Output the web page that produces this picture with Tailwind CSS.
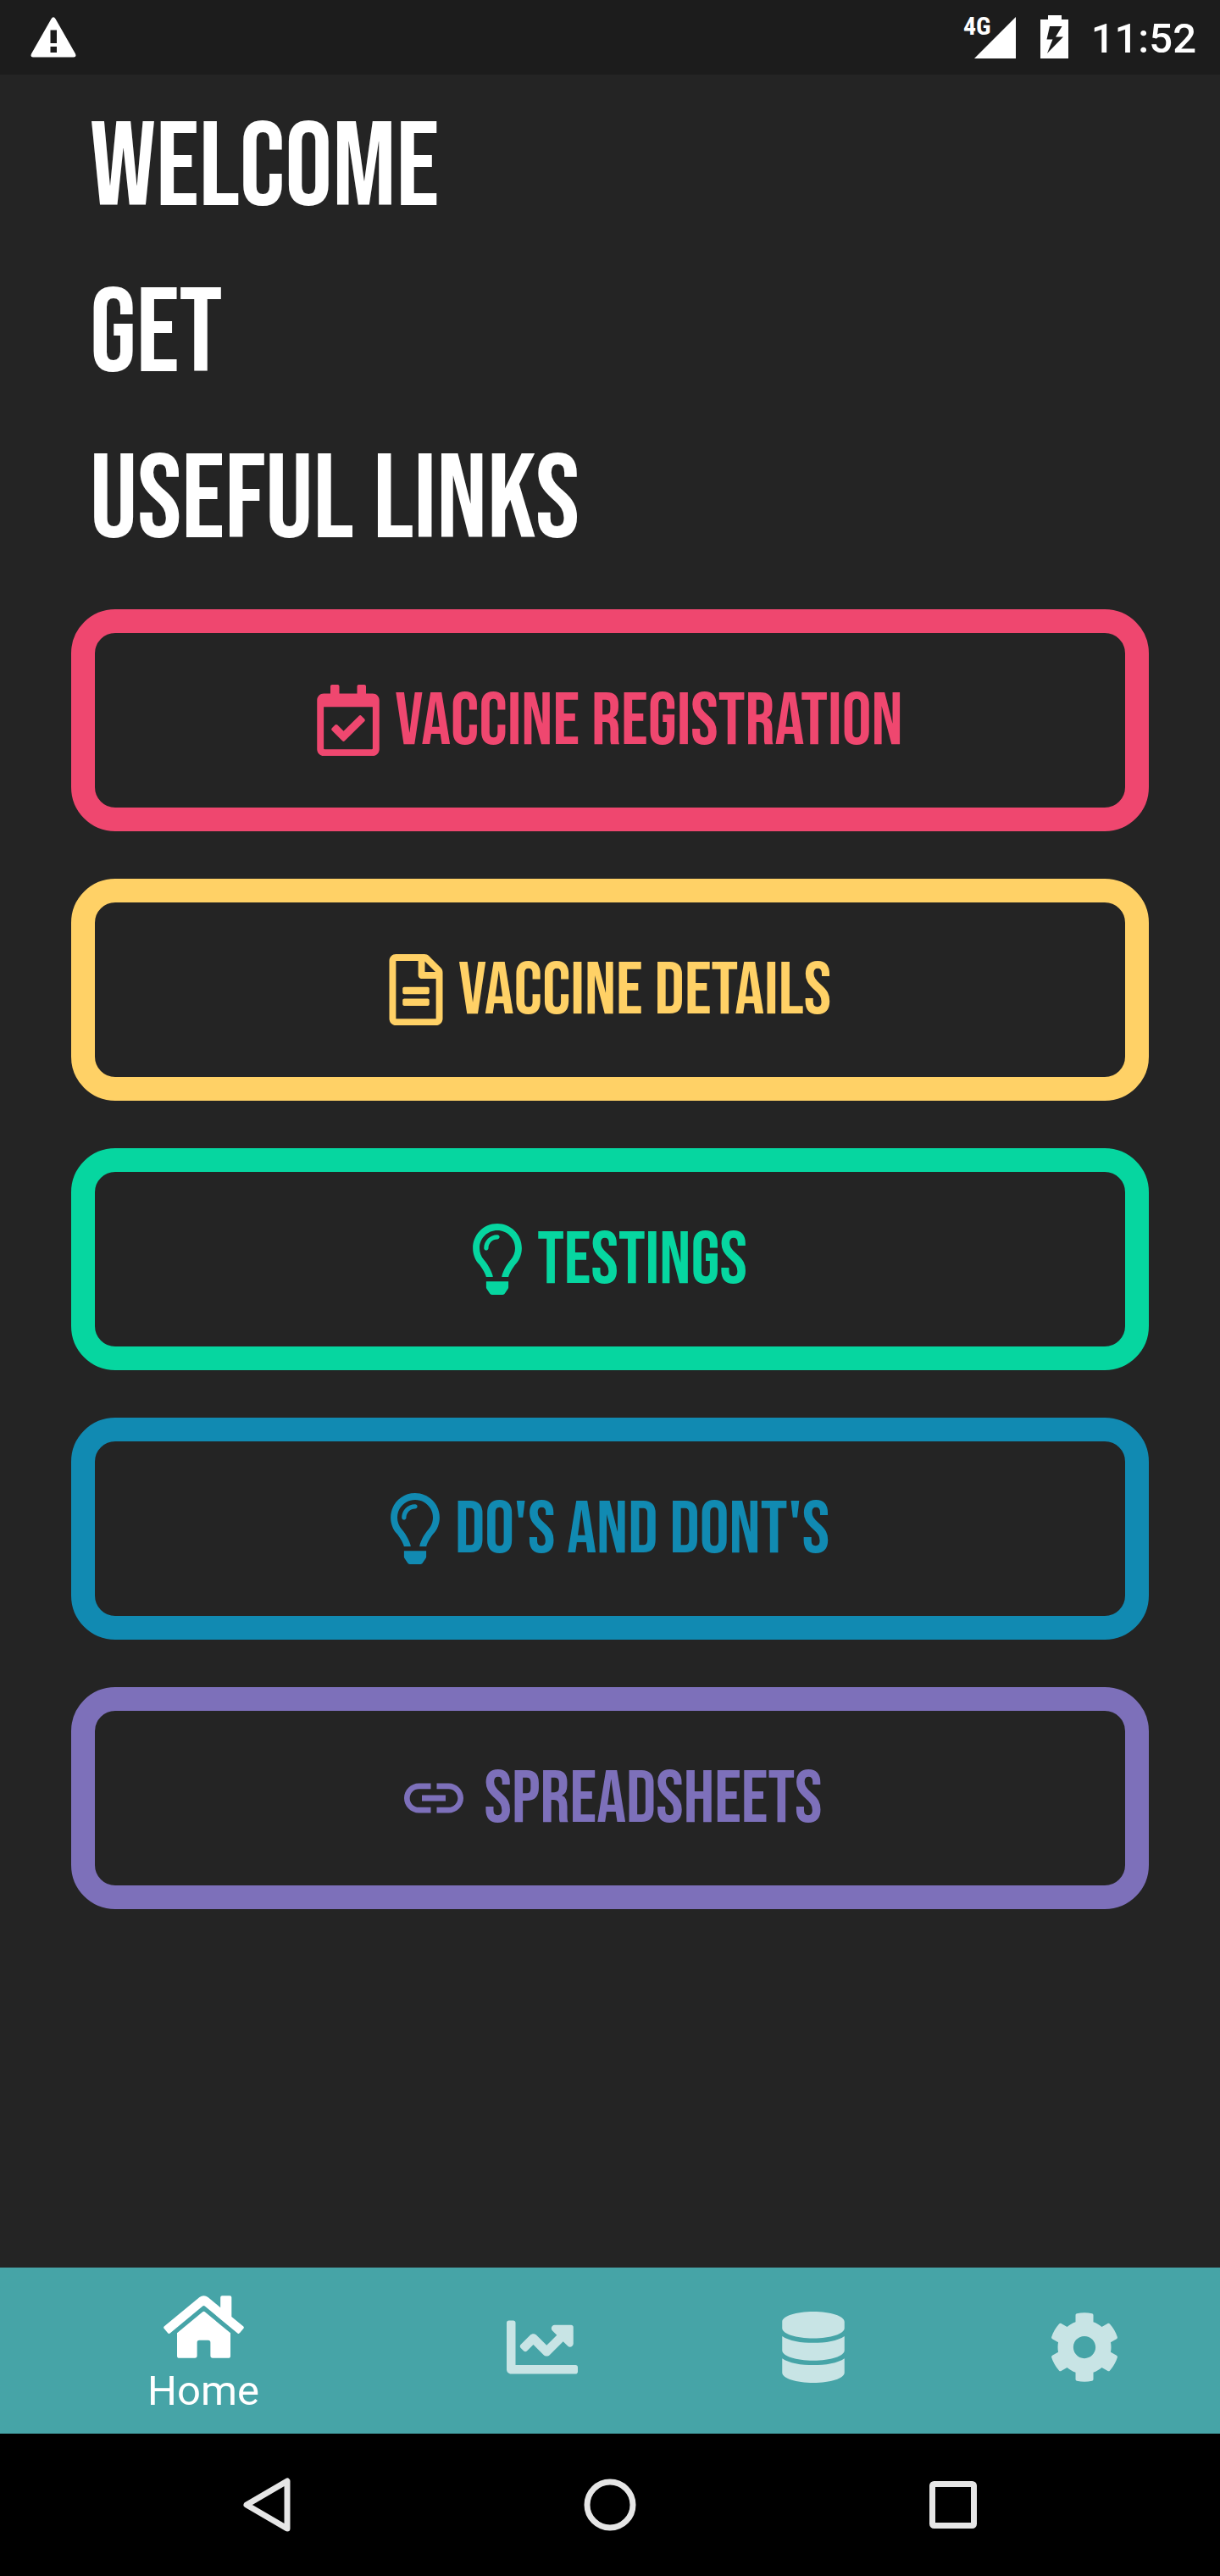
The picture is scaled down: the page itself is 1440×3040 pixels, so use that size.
<!DOCTYPE html>
<html lang="en">
<head>
<meta charset="utf-8">
<meta name="viewport" content="width=device-width, initial-scale=1">
<title>Useful Links</title>
<script src="https://cdn.jsdelivr.net/npm/@tailwindcss/browser@4"></script>
</head>
<body class="flex min-h-screen flex-col bg-[#242424] font-['Roboto',sans-serif] text-white">

<!-- Status bar -->
<header class="flex h-[88px] shrink-0 items-center justify-between bg-[#1c1c1c] pl-9 pr-7">
  <svg class="h-[48px] w-[54px]" viewBox="0 0 54 48" fill="currentColor" aria-label="Warning"><path fill-rule="evenodd" d="M24.5 2.2Q27-1.6 29.5 2.2L53 43.5Q54.600 47.500 51 47.500H3Q-.6 47.500 1 43.500ZM23.500 15.500V31H31V15.500ZM23.500 35V42H31V35Z"/></svg>
  <div class="flex items-center">
    <div class="flex h-[50px] items-start">
      <span class="text-[30px] leading-6 font-bold font-['Roboto_Condensed','Liberation_Sans_Narrow',sans-serif]">4G</span>
      <svg class="-ml-5 h-[50px] w-[50px]" viewBox="0 0 50 50" fill="currentColor" aria-hidden="true"><path d="M49 1V50H0Z"/></svg>
    </div>
    <svg class="ml-7 h-[52px] w-[34px]" viewBox="0 0 34 52" fill="currentColor" aria-label="Charging"><path fill-rule="evenodd" d="M9 0H25V5H33V51H0V5H9ZM11 13L7.500 28.500H14.500L8 45L27 25.500H18L25.500 13Z"/></svg>
    <time class="ml-[26px] pt-1 text-[49px] leading-[56px] font-medium">11:52</time>
  </div>
</header>

<main class="flex flex-1 flex-col px-[84px] pt-[14px] pb-[112px] font-['Bebas_Neue','Liberation_Sans_Narrow',sans-serif]">
  <h1 class="pl-[22px] text-[140px] leading-[196px] font-normal">
    <span class="block">WELCOME</span>
    <span class="block">GET</span>
    <span class="block">USEFUL LINKS</span>
  </h1>

  <nav class="mt-[29px] flex flex-col gap-14 text-[87px] leading-none" aria-label="Useful links">
    <button class="flex h-[262px] items-center justify-center gap-[18px] rounded-[52px] border-[28px] border-[#ef476f] text-[#ef476f]">
      <svg class="h-[84px] w-[74px]" viewBox="0 0 448 512" fill="currentColor" aria-hidden="true"><path d="M400 64h-48V12c0-6.627-5.373-12-12-12h-40c-6.627 0-12 5.373-12 12v52H160V12c0-6.627-5.373-12-12-12h-40c-6.627 0-12 5.373-12 12v52H48C21.490 64 0 85.490 0 112v352c0 26.510 21.490 48 48 48h352c26.510 0 48-21.490 48-48V112c0-26.510-21.490-48-48-48zm-6 400H54a6 6 0 0 1-6-6V160h352v298a6 6 0 0 1-6 6zm-52.849-200.650L198.842 404.519c-4.705 4.667-12.303 4.637-16.971-.068l-75.091-75.699c-4.667-4.705-4.637-12.303.068-16.971l22.719-22.536c4.705-4.667 12.303-4.637 16.970.069l44.104 44.461 111.072-110.181c4.705-4.667 12.303-4.637 16.971.068l22.536 22.718c4.667 4.705 4.636 12.303-.069 16.970z"/></svg>
      <span class="pt-1">VACCINE REGISTRATION</span>
    </button>
    <button class="flex h-[262px] items-center justify-center gap-[18px] rounded-[52px] border-[28px] border-[#ffd166] text-[#ffd166]">
      <svg class="h-[84px] w-[64px]" viewBox="0 0 384 512" fill="currentColor" aria-hidden="true"><path d="M288 248v28c0 6.600-5.400 12-12 12H108c-6.600 0-12-5.400-12-12v-28c0-6.600 5.400-12 12-12h168c6.600 0 12 5.400 12 12zm-12 72H108c-6.600 0-12 5.400-12 12v28c0 6.600 5.400 12 12 12h168c6.600 0 12-5.400 12-12v-28c0-6.600-5.400-12-12-12zm108-188.100V464c0 26.500-21.500 48-48 48H48c-26.500 0-48-21.500-48-48V48C0 21.500 21.500 0 48 0h204.100C264.800 0 277 5.100 286 14.100L369.900 98c9 8.900 14.100 21.200 14.100 33.900zm-128-80V128h76.100L256 51.900zM336 464V176H232c-13.300 0-24-10.700-24-24V48H48v416h288z"/></svg>
      <span class="pt-1">VACCINE DETAILS</span>
    </button>
    <button class="flex h-[262px] items-center justify-center gap-[18px] rounded-[52px] border-[28px] border-[#06d6a0] text-[#06d6a0]">
      <svg class="h-[84px] w-[58px]" viewBox="0 0 352 512" fill="currentColor" aria-hidden="true"><path d="M176 80c-52.940 0-96 43.060-96 96 0 8.840 7.160 16 16 16s16-7.160 16-16c0-35.300 28.720-64 64-64 8.840 0 16-7.160 16-16s-7.160-16-16-16zM96.060 459.170c0 3.150.93 6.220 2.680 8.840l24.510 36.840c2.970 4.460 7.970 7.140 13.320 7.140h78.850c5.360 0 10.360-2.680 13.320-7.140l24.510-36.840c1.740-2.620 2.670-5.700 2.680-8.840l.05-43.180H96.020l.04 43.180zM176 0C73.720 0 0 82.970 0 176c0 44.370 16.450 84.850 43.560 115.780 16.640 18.990 42.740 58.800 52.420 92.160v.06h48v-.12c-.01-4.770-.72-9.510-2.150-14.070-5.590-17.810-22.820-64.770-62.170-109.670-20.540-23.430-31.520-53.150-31.610-84.140-.2-73.640 59.670-128 127.950-128 70.580 0 128 57.420 128 128 0 30.970-11.240 60.850-31.650 84.140-39.110 44.610-56.420 91.470-62.100 109.460a47.507 47.507 0 0 0-2.220 14.300v.1h48v-.05c9.680-33.370 35.780-73.180 52.420-92.160C335.550 260.850 352 220.370 352 176 352 78.800 273.200 0 176 0z"/></svg>
      <span class="pt-1">TESTINGS</span>
    </button>
    <button class="flex h-[262px] items-center justify-center gap-[18px] rounded-[52px] border-[28px] border-[#118ab2] text-[#118ab2]">
      <svg class="h-[84px] w-[58px]" viewBox="0 0 352 512" fill="currentColor" aria-hidden="true"><path d="M176 80c-52.940 0-96 43.060-96 96 0 8.840 7.160 16 16 16s16-7.160 16-16c0-35.300 28.720-64 64-64 8.840 0 16-7.160 16-16s-7.160-16-16-16zM96.060 459.170c0 3.150.93 6.220 2.680 8.840l24.510 36.840c2.970 4.460 7.970 7.140 13.320 7.140h78.850c5.360 0 10.360-2.680 13.320-7.140l24.510-36.840c1.740-2.620 2.670-5.700 2.680-8.840l.05-43.180H96.020l.04 43.180zM176 0C73.720 0 0 82.970 0 176c0 44.370 16.450 84.850 43.560 115.780 16.640 18.990 42.740 58.800 52.420 92.160v.06h48v-.12c-.01-4.770-.72-9.510-2.150-14.070-5.590-17.810-22.820-64.770-62.170-109.670-20.540-23.430-31.520-53.150-31.610-84.140-.2-73.640 59.670-128 127.950-128 70.580 0 128 57.420 128 128 0 30.970-11.240 60.850-31.650 84.140-39.110 44.610-56.420 91.470-62.100 109.460a47.507 47.507 0 0 0-2.220 14.300v.1h48v-.05c9.680-33.370 35.780-73.180 52.420-92.160C335.550 260.850 352 220.370 352 176 352 78.800 273.200 0 176 0z"/></svg>
      <span class="pt-1">DO'S AND DONT'S</span>
    </button>
    <button class="flex h-[262px] items-center justify-center gap-[18px] rounded-[52px] border-[28px] border-[#7d70ba] text-[#7d70ba]">
      <svg class="h-[84px] w-[84px]" viewBox="0 0 24 24" fill="currentColor" aria-hidden="true"><path d="M3.900 12c0-1.710 1.390-3.100 3.100-3.100h4V7H7c-2.760 0-5 2.240-5 5s2.240 5 5 5h4v-1.900H7c-1.710 0-3.100-1.390-3.100-3.100zM8 13h8v-2H8v2zm9-6h-4v1.900h4c1.710 0 3.100 1.390 3.100 3.100s-1.390 3.100-3.100 3.100h-4V17h4c2.760 0 5-2.240 5-5s-2.240-5-5-5z"/></svg>
      <span class="pt-1">SPREADSHEETS</span>
    </button>
  </nav>
</main>

<!-- Tab bar -->
<nav class="grid h-[196px] shrink-0 grid-cols-[3fr_2fr_2fr_2fr] bg-[#46a4a7]" aria-label="Main">
  <a href="#home" class="flex flex-col items-center pt-7" aria-current="page">
    <svg class="h-[84px] w-[95px]" viewBox="0 0 576 512" fill="currentColor" aria-hidden="true"><path d="M280.370 148.260L96 300.110V464a16 16 0 0 0 16 16l112.060-.29a16 16 0 0 0 15.920-16V368a16 16 0 0 1 16-16h64a16 16 0 0 1 16 16v95.640a16 16 0 0 0 16 16.050L464 480a16 16 0 0 0 16-16V300L295.670 148.260a12.190 12.190 0 0 0-15.300 0zM571.600 251.470L488 182.560V44.050a12 12 0 0 0-12-12h-56a12 12 0 0 0-12 12v72.610L318.470 43a48 48 0 0 0-61 0L4.340 251.470a12 12 0 0 0-1.600 16.900l25.500 31A12 12 0 0 0 45.150 301l235.220-193.740a12.190 12.190 0 0 1 15.300 0L530.900 301a12 12 0 0 0 16.900-1.600l25.500-31a12 12 0 0 0-1.700-16.930z"/></svg>
    <span class="mt-[6px] text-[49px] leading-[56px]">Home</span>
  </a>
  <a href="#statistics" class="flex items-center justify-center pb-2 text-white/70" aria-label="Statistics">
    <svg class="h-[84px] w-[84px]" viewBox="0 0 512 512" fill="currentColor" aria-hidden="true"><path d="M496 384H64V80c0-8.840-7.160-16-16-16H16C7.160 64 0 71.160 0 80v336c0 17.670 14.330 32 32 32h464c8.840 0 16-7.160 16-16v-32c0-8.840-7.160-16-16-16zM464 96H345.940c-21.380 0-32.090 25.850-16.970 40.970l32.400 32.400L288 242.750l-73.370-73.370c-12.500-12.500-32.760-12.500-45.250 0l-68.690 68.690c-6.250 6.250-6.250 16.380 0 22.630l22.620 22.620c6.250 6.250 16.380 6.250 22.630 0L192 237.250l73.370 73.370c12.500 12.500 32.760 12.500 45.250 0l96-96 32.400 32.400c15.120 15.120 40.970 4.410 40.970-16.970V112c.01-8.840-7.150-16-15.990-16z"/></svg>
  </a>
  <a href="#data" class="flex items-center justify-center pb-2 text-white/70" aria-label="Data">
    <svg class="h-[84px] w-[74px]" viewBox="0 0 448 512" fill="currentColor" aria-hidden="true"><path d="M448 73.143v45.714C448 159.143 347.667 192 224 192S0 159.143 0 118.857V73.143C0 32.857 100.333 0 224 0s224 32.857 224 73.143zM448 176v102.857C448 319.143 347.667 352 224 352S0 319.143 0 278.857V176c48.125 33.143 136.208 48.572 224 48.572S399.874 209.143 448 176zm0 160v102.857C448 479.143 347.667 512 224 512S0 479.143 0 438.857V336c48.125 33.143 136.208 48.572 224 48.572S399.874 369.143 448 336z"/></svg>
  </a>
  <a href="#settings" class="flex items-center justify-center pb-2 text-white/70" aria-label="Settings">
    <svg class="h-[84px] w-[84px]" viewBox="0 0 512 512" fill="currentColor" aria-hidden="true"><path d="M487.400 315.700l-42.600-24.600c4.300-23.200 4.300-47 0-70.200l42.600-24.600c4.900-2.800 7.100-8.600 5.500-14-11.100-35.600-30-67.800-54.700-94.600-3.800-4.100-10-5.100-14.800-2.300L380.800 110c-17.900-15.400-38.500-27.300-60.800-35.100V25.800c0-5.600-3.900-10.500-9.400-11.700-36.700-8.200-74.300-7.800-109.200 0-5.500 1.200-9.400 6.100-9.400 11.700V75c-22.200 7.900-42.800 19.800-60.800 35.100L88.700 85.500c-4.900-2.800-11-1.900-14.800 2.300-24.700 26.700-43.600 58.900-54.700 94.600-1.700 5.400.6 11.200 5.500 14L67.300 221c-4.300 23.200-4.300 47 0 70.200l-42.600 24.600c-4.900 2.800-7.100 8.600-5.500 14 11.100 35.600 30 67.800 54.700 94.600 3.800 4.100 10 5.100 14.800 2.300l42.600-24.600c17.900 15.400 38.500 27.300 60.800 35.100v49.200c0 5.600 3.900 10.500 9.400 11.700 36.700 8.200 74.300 7.800 109.200 0 5.500-1.200 9.400-6.100 9.400-11.700v-49.200c22.200-7.900 42.800-19.800 60.800-35.100l42.600 24.600c4.900 2.800 11 1.900 14.800-2.300 24.700-26.700 43.600-58.900 54.700-94.600 1.500-5.500-.7-11.300-5.600-14.100zM256 336c-44.100 0-80-35.900-80-80s35.900-80 80-80 80 35.900 80 80-35.900 80-80 80z"/></svg>
  </a>
</nav>

<!-- System navigation -->
<footer class="grid h-[168px] shrink-0 grid-cols-3 bg-black px-[112px] text-[#e6e6e6]">
  <button class="flex items-center justify-center" aria-label="Back">
    <svg class="h-[66px] w-[58px]" viewBox="0 0 58 66" fill="none" stroke="currentColor" stroke-width="7" stroke-linejoin="round" aria-hidden="true"><path d="M53 5V61L5 33Z"/></svg>
  </button>
  <button class="flex items-center justify-center" aria-label="Home screen">
    <svg class="h-[62px] w-[62px]" viewBox="0 0 62 62" fill="none" stroke="currentColor" stroke-width="7" aria-hidden="true"><circle cx="31" cy="31" r="27"/></svg>
  </button>
  <button class="flex items-center justify-center" aria-label="Recent apps">
    <svg class="h-[56px] w-[56px]" viewBox="0 0 56 56" fill="none" stroke="currentColor" stroke-width="7" stroke-linejoin="round" aria-hidden="true"><rect x="3.500" y="3.500" width="49" height="49" rx="2"/></svg>
  </button>
</footer>
</body>
</html>
